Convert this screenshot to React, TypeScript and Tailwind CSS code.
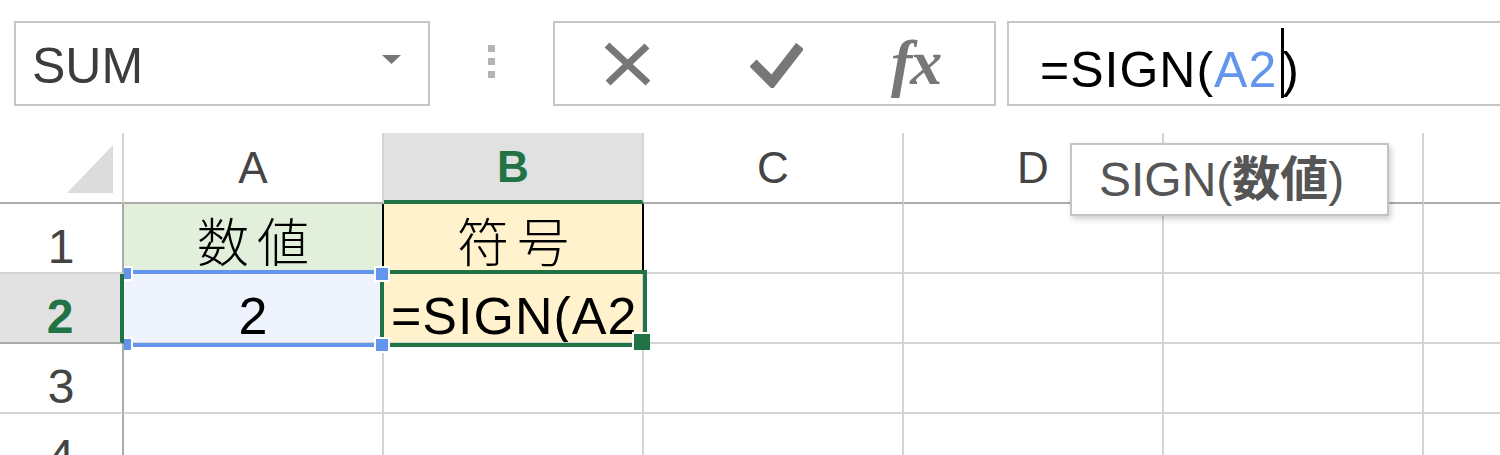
import React from 'react'

const GREEN = 'border-[#217346]'

function Toolbar() {
  return (
    <div className="flex h-[133px] items-start pt-[21px]">
      {/* name box */}
      <div className="ml-[14px] flex h-[85px] w-[416px] shrink-0 items-start border-2 border-[#c6c6c6] pl-[16px] pt-[18px]">
        <span className="text-[50px] leading-none text-[#3c3c3c]">SUM</span>
        <svg className="ml-auto mr-[27px] mt-[14px]" width="19" height="9" viewBox="0 0 19 9">
          <polygon points="0,0 19,0 9.5,9" fill="#777" />
        </svg>
      </div>

      {/* grip dots */}
      <div className="flex h-[85px] w-[123px] shrink-0 flex-col gap-[6px] pl-[58px] pt-[24px]">
        <div className="h-[7px] w-[7px] bg-[#b4b4b4]" />
        <div className="h-[7px] w-[7px] bg-[#b4b4b4]" />
        <div className="h-[7px] w-[7px] bg-[#b4b4b4]" />
      </div>

      {/* cancel / enter / fx */}
      <div className="flex h-[85px] w-[443px] shrink-0 items-start border-2 border-[#c6c6c6] pl-[49px]">
        <svg className="mt-[19px] shrink-0" width="47" height="44" viewBox="0 0 47 44">
          <path d="M3 3 L44 41" stroke="#777" strokeWidth="7" />
          <path d="M43 4 L4 41" stroke="#777" strokeWidth="7" />
        </svg>
        <svg className="ml-[99px] mt-[20px] shrink-0" width="53" height="45" viewBox="0 0 53 45">
          <path d="M3 20 L22 39 L50 3" stroke="#777" strokeWidth="10" fill="none" />
        </svg>
        <span className="ml-[88px] mt-[8px] font-['Liberation_Serif',serif] text-[64px] font-bold italic leading-none tracking-[-2px] text-[#777]">
          fx
        </span>
      </div>

      {/* formula input */}
      <div className="ml-[11px] flex h-[85px] w-[520px] shrink-0 items-start border-2 border-[#c6c6c6] pl-[31px]">
        <span className="mt-[22px] text-[50px] leading-none tracking-[1px] text-black">=SIGN(</span>
        <span className="mt-[22px] text-[50px] leading-none tracking-[1px] text-[#6495ed]">A2</span>
        <div className="ml-[4px] mt-[5px] h-[70px] w-[3px] bg-black" />
        <span className="-ml-[2px] mt-[22px] text-[50px] leading-none text-black">)</span>
      </div>
    </div>
  )
}

const colHead =
  'flex items-center justify-center border-r-2 border-b-2 border-r-[#d4d4d4] border-b-[#ababab] text-[44px] leading-none text-[#444]'
const rowHead =
  'flex items-end justify-center border-r-2 border-b-2 border-r-[#ababab] border-b-[#d4d4d4] pb-[1px] text-[48px] leading-none text-[#444]'
const cell = 'border-r-2 border-b-2 border-[#d4d4d4]'
const cjk = "font-['Noto_Sans_CJK_JP',sans-serif] text-[52px] font-light leading-none tracking-[8px] text-black"

function Sheet() {
  const cols = ['A', 'B', 'C', 'D', 'E', 'F']
  return (
    <div className="relative">
      <div className="grid grid-cols-[124px_repeat(6,260px)] grid-rows-[71px_repeat(4,70px)]">
        {/* header row */}
        <div className="relative border-r-2 border-b-2 border-r-[#d4d4d4] border-b-[#ababab]">
          <svg className="absolute left-[67px] top-[12px]" width="46" height="48" viewBox="0 0 46 48">
            <polygon points="46,0 46,48 0,48" fill="#dcdcdc" />
          </svg>
        </div>
        {cols.map((c) =>
          c === 'B' ? (
            <div
              key={c}
              className="flex items-center justify-center border-r-2 border-b-4 border-r-[#d4d4d4] border-b-[#217346] bg-[#e1e1e1] text-[44px] font-bold leading-none text-[#217346]"
            >
              B
            </div>
          ) : (
            <div key={c} className={colHead}>
              {c === 'E' || c === 'F' ? '' : c}
            </div>
          )
        )}

        {/* row 1 */}
        <div className={rowHead}>1</div>
        <div className="flex items-center justify-center border-r-2 border-b-2 border-r-black border-b-[#d4d4d4] bg-[#e2efda] pl-[8px] pt-[4px]">
          <span className={cjk}>数値</span>
        </div>
        <div className="flex items-center justify-center border-r-2 border-b-2 border-r-black border-b-[#d4d4d4] bg-[#fff2cc] pl-[8px] pt-[4px]">
          <span className={cjk}>符号</span>
        </div>
        <div className={cell} />
        <div className={cell} />
        <div className={cell} />
        <div className={cell} />

        {/* row 2 */}
        <div className="flex items-end justify-center border-r-4 border-b-2 border-r-[#217346] border-b-[#ababab] bg-[#e1e1e1] pb-[1px] text-[48px] font-bold leading-none text-[#217346]">
          2
        </div>
        <div className="flex items-end justify-center border-r-2 border-b-2 border-[#d4d4d4] bg-[#eef3fd]">
          <span className="text-[52px] leading-none text-black">2</span>
        </div>
        <div className="flex items-end overflow-hidden whitespace-nowrap border-r-2 border-b-2 border-[#d4d4d4] bg-[#fff2cc] pl-[7px]">
          <span className="text-[52px] leading-none tracking-[1px] text-black">=SIGN(A2</span>
          <span className="ml-[6px] text-[52px] leading-none text-black">)</span>
        </div>
        <div className={cell} />
        <div className={cell} />
        <div className={cell} />
        <div className={cell} />

        {/* rows 3, 4 */}
        {[3, 4].map((r) => (
          <React.Fragment key={r}>
            <div className={rowHead}>{r}</div>
            {cols.map((c) => (
              <div key={c} className={cell} />
            ))}
          </React.Fragment>
        ))}
      </div>

      {/* range reference A2 */}
      <div className="absolute left-[124px] top-[137px] h-[4px] w-[260px] bg-[#6495ed]" />
      <div className="absolute left-[124px] top-[210px] h-[4px] w-[260px] bg-[#6495ed]" />

      {/* active cell B2 */}
      <div className={`absolute left-[380px] top-[137px] h-[77px] w-[267px] border-4 ${GREEN}`} />
      <div className="absolute left-[632px] top-[199px] h-[18px] w-[18px] border-l-2 border-t-2 border-white bg-[#217346]" />

      {/* range handles */}
      <div className="absolute left-[124px] top-[133px] h-[15px] w-[9px] border-y-2 border-r-2 border-white bg-[#6495ed]" />
      <div className="absolute left-[124px] top-[204px] h-[15px] w-[9px] border-y-2 border-r-2 border-white bg-[#6495ed]" />
      <div className="absolute left-[374px] top-[133px] h-[16px] w-[16px] border-2 border-white bg-[#6495ed]" />
      <div className="absolute left-[374px] top-[204px] h-[16px] w-[16px] border-2 border-white bg-[#6495ed]" />
    </div>
  )
}

function Tooltip() {
  return (
    <div className="absolute left-[1070px] top-[143px] flex h-[73px] w-[319px] items-center border-2 border-[#c4c4c4] bg-white pl-[27px] shadow-[2px_3px_6px_rgba(0,0,0,0.2)]">
      <span className="text-[48px] leading-none text-[#555]">
        SIGN(<span className="font-bold">数値</span>)
      </span>
    </div>
  )
}

export default function App() {
  return (
    <div className="relative h-[455px] w-[1500px] overflow-hidden bg-white font-['Liberation_Sans','Noto_Sans_CJK_JP',sans-serif]">
      <Toolbar />
      <Sheet />
      <Tooltip />
    </div>
  )
}
